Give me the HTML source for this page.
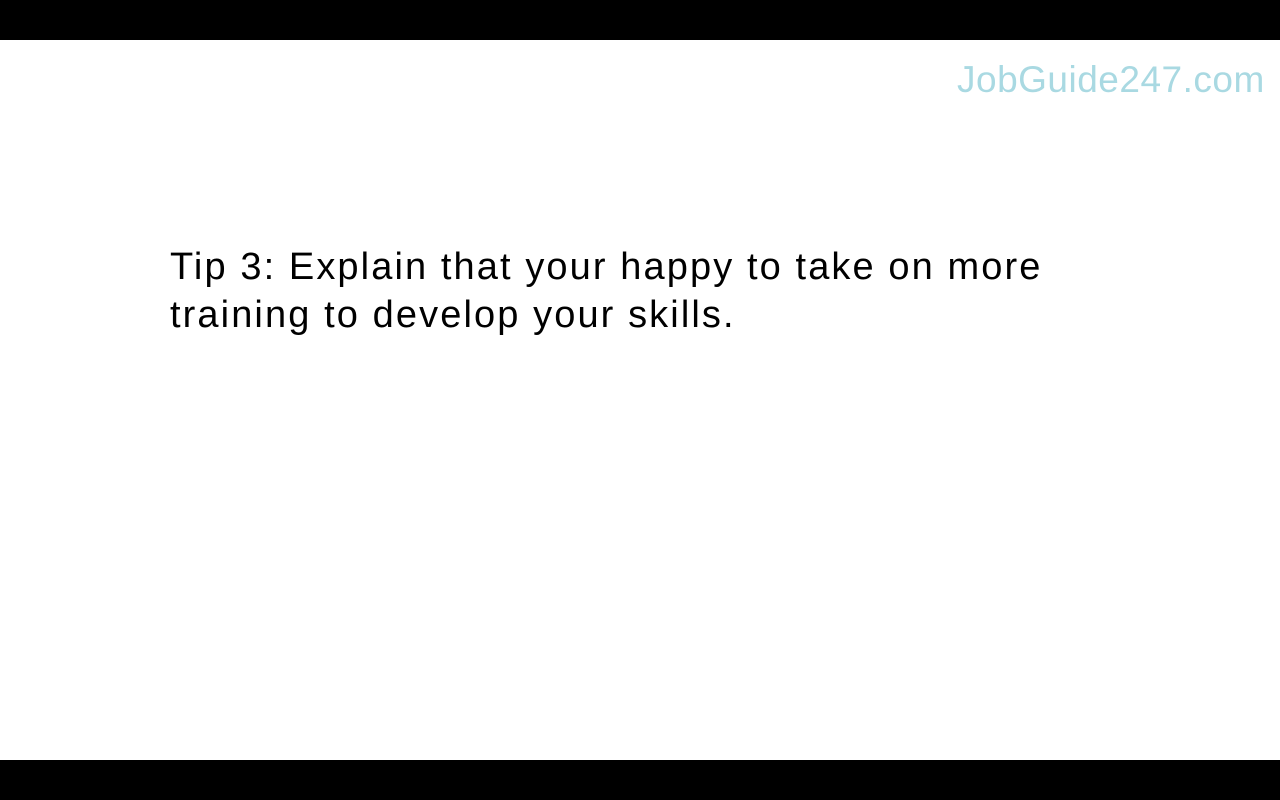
<!DOCTYPE html>
<html><head><style>
html,body{margin:0;padding:0;width:1280px;height:800px;overflow:hidden;background:#fff;}
.bar{position:absolute;left:0;width:1280px;height:40px;background:#000;}
.logo{position:absolute;left:957px;top:59px;font-family:"Liberation Sans",sans-serif;font-size:37px;color:#a9d9e2;letter-spacing:0.5px;}
.txt{position:absolute;left:170px;top:243px;font-family:"Liberation Sans",sans-serif;font-size:38px;line-height:48px;color:#000;white-space:nowrap;letter-spacing:2.1px;}
</style></head><body>
<div class="bar" style="top:0"></div>
<div class="bar" style="top:760px"></div>
<div class="logo">JobGuide247.com</div>
<div class="txt">Tip 3: Explain that your happy to take on more<br>training to develop your skills.</div>
</body></html>
